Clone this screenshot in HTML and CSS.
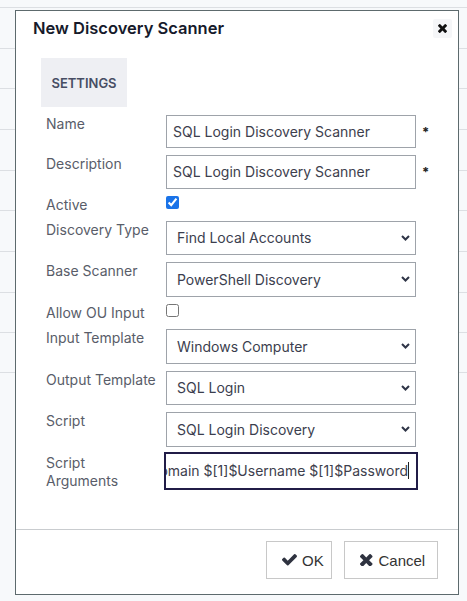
FILE: index.html
```html
<!DOCTYPE html>
<html lang="en">
<head>
<meta charset="utf-8">
<title>New Discovery Scanner</title>
<link rel="stylesheet" href="styles.css">
</head>
<body>
<div class="bg-table">
  <div class="bg-row"></div><div class="bg-row"></div><div class="bg-row"></div>
  <div class="bg-row"></div><div class="bg-row"></div><div class="bg-row"></div>
  <div class="bg-row"></div><div class="bg-row"></div><div class="bg-row last"></div>
</div>

<div class="modal" role="dialog">
  <div class="modal-header">
    <h1 class="modal-title">New Discovery Scanner</h1>
    <button class="close" type="button" aria-label="Close">
      <svg class="ico-close" viewBox="302 366 1188 1188"><path d="M1490 1322q0 40-28 68l-136 136q-28 28-68 28t-68-28l-294-294-294 294q-28 28-68 28t-68-28l-136-136q-28-28-28-68t28-68l294-294-294-294q-28-28-28-68t28-68l136-136q28-28 68-28t68 28l294 294 294-294q28-28 68-28t68 28l136 136q28 28 28 68t-28 68l-294 294 294 294q28 28 28 68z"/></svg>
    </button>
  </div>

  <div class="modal-body">
    <div class="tabs"><div class="tab">SETTINGS</div></div>
    <form class="form">
      <div class="row">
        <label class="label">Name</label>
        <input class="text-input" type="text" value="SQL Login Discovery Scanner">
        <span class="req">*</span>
      </div>
      <div class="row">
        <label class="label">Description</label>
        <input class="text-input" type="text" value="SQL Login Discovery Scanner">
        <span class="req">*</span>
      </div>
      <div class="row check-row">
        <label class="label">Active</label>
        <input class="check" type="checkbox" checked>
      </div>
      <div class="row">
        <label class="label">Discovery Type</label>
        <div class="select-wrap">
          <select class="select"><option>Find Local Accounts</option></select>
          <svg class="chev" viewBox="0 0 9 6"><polyline points="1,1 4.5,4.5 8,1"/></svg>
        </div>
      </div>
      <div class="row">
        <label class="label">Base Scanner</label>
        <div class="select-wrap">
          <select class="select"><option>PowerShell Discovery</option></select>
          <svg class="chev" viewBox="0 0 9 6"><polyline points="1,1 4.5,4.5 8,1"/></svg>
        </div>
      </div>
      <div class="row check-row">
        <label class="label">Allow OU Input</label>
        <input class="check" type="checkbox">
      </div>
      <div class="row">
        <label class="label">Input Template</label>
        <div class="select-wrap">
          <select class="select"><option>Windows Computer</option></select>
          <svg class="chev" viewBox="0 0 9 6"><polyline points="1,1 4.5,4.5 8,1"/></svg>
        </div>
      </div>
      <div class="row">
        <label class="label">Output Template</label>
        <div class="select-wrap">
          <select class="select"><option>SQL Login</option></select>
          <svg class="chev" viewBox="0 0 9 6"><polyline points="1,1 4.5,4.5 8,1"/></svg>
        </div>
      </div>
      <div class="row">
        <label class="label">Script</label>
        <div class="select-wrap">
          <select class="select"><option>SQL Login Discovery</option></select>
          <svg class="chev" viewBox="0 0 9 6"><polyline points="1,1 4.5,4.5 8,1"/></svg>
        </div>
      </div>
      <div class="row">
        <label class="label">Script Arguments</label>
        <div class="args-input" role="textbox"><span class="args-text">$[1]$Domain $[1]$Username $[1]$Password</span><span class="caret"></span></div>
      </div>
    </form>
  </div>

  <div class="modal-footer">
    <button class="btn btn-ok" type="button">
      <svg class="ico-check" viewBox="121 334 1550 1188"><path d="M1671 566q0 40-28 68l-724 724-136 136q-28 28-68 28t-68-28l-136-136-362-362q-28-28-28-68t28-68l136-136q28-28 68-28t68 28l294 295 656-657q28-28 68-28t68 28l136 136q28 28 28 68z"/></svg>OK
    </button>
    <button class="btn btn-cancel" type="button">
      <svg class="ico-times" viewBox="302 366 1188 1188"><path d="M1490 1322q0 40-28 68l-136 136q-28 28-68 28t-68-28l-294-294-294 294q-28 28-68 28t-68-28l-136-136q-28-28-28-68t28-68l294-294-294-294q-28-28-28-68t28-68l136-136q28-28 68-28t68 28l294 294 294-294q28-28 68-28t68 28l136 136q28 28 28 68t-28 68l-294 294 294 294q28 28 28 68z"/></svg>Cancel
    </button>
  </div>
</div>
</body>
</html>
```

FILE: styles.css
```css
* { box-sizing: border-box; }

html, body {
  margin: 0;
  padding: 0;
  background: #f7f9fb;
  font-family: Inter, "Noto Sans", sans-serif;
}

body {
  width: 467px;
  height: 601px;
  overflow: hidden;
  position: relative;
}

.bg-table {
  padding-top: 7px;
}

.bg-row {
  height: 40.67px;
  border-top: 1px solid #dcdfe3;
}

.bg-row.last {
  border-bottom: 1px solid #dcdfe3;
}

.modal {
  position: absolute;
  left: 15px;
  top: 10px;
  width: 444px;
  height: 585px;
  border: 1px solid #5d6a6d;
  background: #fff;
  display: flex;
  flex-direction: column;
}

.modal-header {
  height: 47px;
  flex: none;
  display: flex;
  justify-content: space-between;
  align-items: flex-start;
  padding: 5px 6px 0 17px;
}

.modal-title {
  margin: 0;
  font-size: 16.5px;
  font-weight: 600;
  line-height: 24px;
  color: #161a2b;
}

.close {
  margin-top: 3px;
  width: 19px;
  height: 19px;
  padding: 0;
  border: none;
  border-radius: 2px;
  background: #f5f6f8;
  display: flex;
  align-items: center;
  justify-content: center;
}

.ico-close {
  width: 9px;
  height: 9px;
  fill: #111;
}

.modal-body {
  flex: 1;
  padding-left: 25px;
}

.tabs {
  display: flex;
}

.tab {
  width: 86px;
  height: 49px;
  background: #eeeff3;
  display: flex;
  align-items: center;
  justify-content: center;
  font-size: 13px;
  font-weight: 600;
  color: #474d63;
}

.form {
  margin-top: 8px;
  padding-left: 5px;
}

.row {
  display: flex;
  align-items: flex-start;
  margin-bottom: 7px;
}

.check-row {
  height: 18px;
}

.label {
  width: 120px;
  flex: none;
  padding-right: 8px;
  font-size: 14px;
  line-height: 18px;
  color: #595d69;
}

.text-input {
  width: 250px;
  height: 33.33px;
  margin: 0;
  border: 1px solid #9ea3aa;
  border-radius: 0;
  padding: 0 6px;
  font-family: Inter, "Noto Sans", sans-serif;
  font-size: 14px;
  color: #3d404d;
  background: #fff;
}

.req {
  align-self: center;
  margin-left: 6px;
  font-size: 13px;
  font-weight: 700;
  color: #222;
}

.check {
  margin: 0;
  width: 13px;
  height: 13px;
  accent-color: #1a73e8;
}

.select-wrap {
  position: relative;
  width: 250px;
  height: 34.67px;
}

.select {
  appearance: none;
  -webkit-appearance: none;
  width: 100%;
  height: 100%;
  margin: 0;
  border: 1px solid #9ea3aa;
  border-radius: 0;
  padding: 0 10px;
  background: #fff;
  font-family: Inter, "Noto Sans", sans-serif;
  font-size: 14px;
  color: #3b3e4e;
}

.chev {
  position: absolute;
  right: 6px;
  top: 14px;
  width: 9px;
  height: 6px;
  fill: none;
  stroke: #2f3547;
  stroke-width: 2;
}

.args-input {
  width: 254px;
  height: 38px;
  margin: -2px 0 0 -2px;
  border: 2px solid #211c47;
  display: flex;
  justify-content: flex-end;
  align-items: center;
  overflow: hidden;
  padding: 0 7px 0 6px;
  background: #fff;
  white-space: nowrap;
  font-size: 14px;
  color: #3d404d;
}

.args-text {
  flex: none;
}

.caret {
  flex: none;
  width: 1px;
  height: 17px;
  background: #222;
}

.modal-footer {
  flex: none;
  border-top: 1px solid #c9cccf;
  padding: 11px 20px 15px;
  display: flex;
  justify-content: flex-end;
  gap: 12px;
}

.btn {
  height: 38px;
  border: 1px solid #c8c8c8;
  background: #fff;
  border-radius: 0;
  display: inline-flex;
  align-items: center;
  padding: 0 0 0 15px;
  font-family: "Liberation Sans", Arial, sans-serif;
  font-size: 15px;
  color: #333;
}

.btn-ok { width: 66px; }
.btn-cancel { width: 94px; }

.ico-check {
  width: 15px;
  height: 11.5px;
  margin-right: 5px;
  fill: #2f3340;
}

.ico-times {
  width: 12.5px;
  height: 12.5px;
  margin-right: 6px;
  fill: #2f3340;
}
```
